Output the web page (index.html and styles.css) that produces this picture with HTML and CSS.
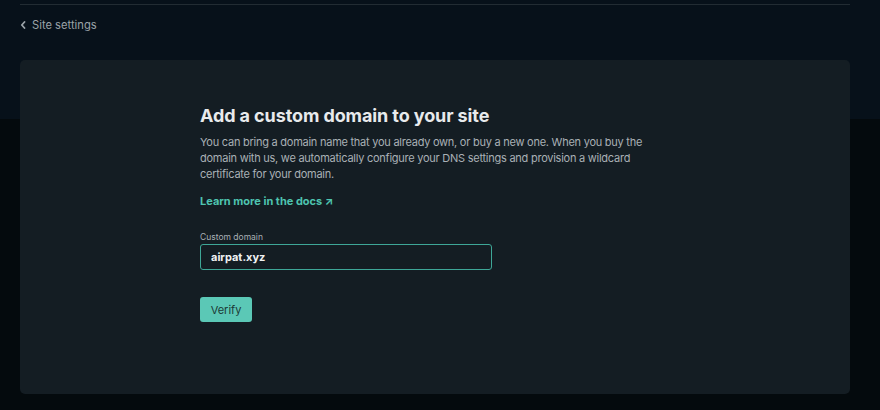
FILE: index.html
```html
<!DOCTYPE html>
<html lang="en">
<head>
    <meta charset="UTF-8">
    <meta name="viewport" content="width=device-width, initial-scale=1.0">
    <title>Custom domain</title>
    <link rel="stylesheet" href="styles.css">
</head>
<body>
    <div class="top-band">
        <div class="top-line"></div>
        <a class="back-link" href="#">
            <svg class="chevron" width="6" height="8" viewBox="0 0 6 8"><path d="M4.5 1 L1.8 4 L4.5 7" fill="none" stroke="#9ba3a8" stroke-width="1.8" stroke-linecap="round" stroke-linejoin="round"/></svg>
            Site settings
        </a>
    </div>

    <div class="card">
        <div class="content">
            <h1>Add a custom domain to your site</h1>
            <p class="intro">You can bring a domain name that you already own, or buy a new one. When you buy the domain with us, we automatically configure your DNS settings and provision a wildcard certificate for your domain.</p>
            <a class="docs-link" href="#">Learn more in the docs <span class="arrow">&#8599;</span></a>

            <label for="domain">Custom domain</label>
            <input type="text" id="domain" value="airpat.xyz">

            <button>Verify</button>
        </div>
    </div>
</body>
</html>
```

FILE: styles.css
```css
body {
    background-color: #040a0d;
    font-family: Inter, "Liberation Sans", Arial, sans-serif;
    margin: 0;
    padding: 0;
    height: 410px;
}

.top-band {
    background-color: #07111a;
    height: 119px;
    padding: 4px 30px 0 20px;
    box-sizing: border-box;
}

.top-line {
    height: 1px;
    background-color: #222c33;
}

.back-link {
    display: flex;
    align-items: center;
    gap: 6px;
    margin-top: 13px;
    color: #9ba3a8;
    font-size: 11.2px;
    text-decoration: none;
}

.card {
    background-color: #141d23;
    border-radius: 5px;
    margin: -59px 30px 0 20px;
    height: 334px;
    padding: 45px 0 0 180px;
    box-sizing: border-box;
}

.content {
    width: 450px;
}

h1 {
    color: #e8eaec;
    font-size: 18px;
    font-weight: 700;
    margin: 0 0 8px 0;
    letter-spacing: -0.1px;
}

.intro {
    color: #a9b0b5;
    font-size: 11px;
    letter-spacing: -0.25px;
    line-height: 16px;
    margin: 0 0 7px 0;
}

.docs-link {
    display: inline-block;
    color: #4ec4b0;
    font-size: 11px;
    font-weight: 700;
    text-decoration: none;
}

.arrow {
    font-size: 11px;
    font-weight: 700;
}

label {
    display: block;
    color: #a9b0b5;
    font-size: 8.5px;
    margin: 23px 0 2px 0;
}

input {
    display: block;
    width: 292px;
    height: 26px;
    box-sizing: border-box;
    background-color: #141d23;
    border: 1.5px solid #3ea797;
    border-radius: 3px;
    color: #f0f2f3;
    font-family: Inter, "Liberation Sans", Arial, sans-serif;
    font-size: 11px;
    font-weight: 700;
    padding: 0 10px;
    outline: none;
}

button {
    display: block;
    margin-top: 27px;
    background-color: #5bc8b6;
    color: #1c3a36;
    border: none;
    border-radius: 3px;
    font-family: Inter, "Liberation Sans", Arial, sans-serif;
    font-size: 11px;
    width: 52px;
    height: 25px;
    padding: 0;
}
```
